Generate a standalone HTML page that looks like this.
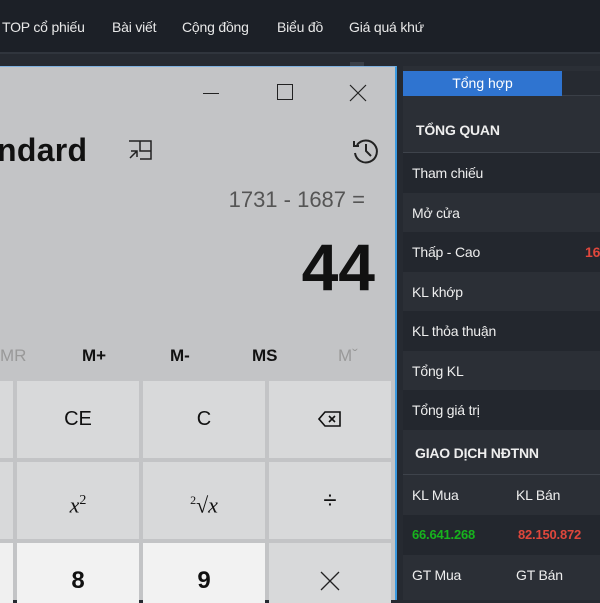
<!DOCTYPE html>
<html><head><meta charset="utf-8"><style>
*{margin:0;padding:0;box-sizing:border-box}
body{width:600px;height:600px;overflow:hidden;background:#262a31;font-family:"Liberation Sans",sans-serif;position:relative}
.nav{position:absolute;left:0;top:0;width:600px;height:54px;background:#1c2027;border-bottom:2px solid #30353d}
.nav span{position:absolute;top:19px;color:#e8e8e8;font-size:14px;letter-spacing:-0.2px}
.calc{position:absolute;left:0;top:66px;width:397px;height:534px;background:#c3c4c6;border-top:1px solid #7fb0de;border-right:2px solid #3b9ae0}
.t{position:absolute;font-family:"Liberation Sans",sans-serif;color:#111}
.btn{position:absolute;background:#d8d9da;font-size:20px;color:#111;text-align:center;font-family:"Liberation Sans",sans-serif}
.panel{position:absolute;left:403px;top:66px;width:197px;height:534px;background:#2b2f36}
.row{position:absolute;left:403px;width:197px;height:40px;color:#eee;font-size:14px;letter-spacing:-0.2px}
.row span{position:absolute;top:12px}
</style></head><body>
<div class="nav">
<span style="left:2px">TOP cổ phiếu</span>
<span style="left:112px">Bài viết</span>
<span style="left:182px">Cộng đồng</span>
<span style="left:277px">Biểu đồ</span>
<span style="left:349px">Giá quá khứ</span>
</div>
<div style="position:absolute;left:350px;top:62px;width:14px;height:6px;background:#3a3f47"></div>
<div class="panel"></div>
<div style="position:absolute;left:403px;top:71px;width:159px;height:25px;background:#2f74d0;color:#fff;font-size:14px;text-align:center;line-height:25px">Tổng hợp</div>
<div style="position:absolute;left:562px;top:71px;width:38px;height:25px;background:#262a31;border-bottom:1px solid #3a3f47"></div>
<div class="row" style="top:110px;height:43px;border-bottom:1px solid #3e434b;background:#2b2f36"><span style="left:13px;top:12px;font-weight:bold;font-size:14px">TỔNG QUAN</span></div>
<div class="row" style="top:153px;background:#23272e"><span style="left:9px">Tham chiếu</span></div>
<div class="row" style="top:193px;background:#2b2f36"><span style="left:9px">Mở cửa</span></div>
<div class="row" style="top:232px;background:#23272e"><span style="left:9px">Thấp - Cao</span><span style="left:182px;color:#e0473c;font-weight:bold">16</span></div>
<div class="row" style="top:272px;background:#2b2f36"><span style="left:9px">KL khớp</span></div>
<div class="row" style="top:311px;background:#23272e"><span style="left:9px">KL thỏa thuận</span></div>
<div class="row" style="top:351px;background:#2b2f36"><span style="left:9px">Tổng KL</span></div>
<div class="row" style="top:390px;background:#23272e"><span style="left:9px">Tổng giá trị</span></div>
<div class="row" style="top:430px;height:45px;border-bottom:1px solid #3e434b;background:#2b2f36"><span style="left:12px;top:15px;font-weight:bold">GIAO DỊCH NĐTNN</span></div>
<div class="row" style="top:475px;background:#2b2f36"><span style="left:9px">KL Mua</span><span style="left:113px">KL Bán</span></div>
<div class="row" style="top:515px;background:#23272e"><span style="left:9px;color:#17b31d;font-weight:bold;font-size:13px">66.641.268</span><span style="left:115px;color:#e0473c;font-weight:bold;font-size:13px">82.150.872</span></div>
<div class="row" style="top:555px;background:#2b2f36"><span style="left:9px">GT Mua</span><span style="left:113px">GT Bán</span></div>

<div class="calc">
<div style="position:absolute;left:203px;top:26px;width:16px;height:1px;background:#222"></div>
<div style="position:absolute;left:277px;top:17px;width:16px;height:16px;border:1px solid #222"></div>
<svg style="position:absolute;left:349px;top:17px" width="18" height="18"><path d="M1 1L17 17M17 1L1 17" stroke="#222" stroke-width="1.2"/></svg>
<div class="t" style="left:-3px;top:65px;font-size:32px;font-weight:bold;letter-spacing:0.3px">ndard</div>
<svg style="position:absolute;left:128px;top:72px" width="26" height="22" fill="none" stroke="#222" stroke-width="1.5"><path d="M1 2H23V20H12M12 2V12H23M2 19L9 12M3 12H9V18"/></svg>
<svg style="position:absolute;left:352px;top:70px" width="28" height="28" fill="none" stroke="#222" stroke-width="2"><path d="M5 8A11 11 0 1 1 3 16M2 4V9H7M14 7V14L19 19"/></svg>
<div class="t" style="right:30px;top:120px;font-size:22px;color:#555">1731 - 1687 =</div>
<div class="t" style="right:20px;top:162px;font-size:66px;font-weight:bold">44</div>
<div class="t" style="left:0px;top:279px;font-size:17px;color:#999">MR</div>
<div class="t" style="left:82px;top:279px;font-size:17px;font-weight:bold">M+</div>
<div class="t" style="left:170px;top:279px;font-size:17px;font-weight:bold">M-</div>
<div class="t" style="left:252px;top:279px;font-size:17px;font-weight:bold">MS</div>
<div class="t" style="left:338px;top:279px;font-size:17px;color:#999">Mˇ</div>
<div class="btn" style="left:0;top:314px;width:13px;height:77px"></div>
<div class="btn" style="left:17px;top:314px;width:122px;height:77px;line-height:77px">CE</div>
<div class="btn" style="left:143px;top:314px;width:122px;height:77px;line-height:77px">C</div>
<div class="btn" style="left:269px;top:314px;width:122px;height:77px">
<svg style="margin-top:29px" width="24" height="18" fill="none" stroke="#111" stroke-width="1.6"><path d="M7 2H22V16H7L1 9Z M11 6L17 12M17 6L11 12"/></svg></div>
<div class="btn" style="left:0;top:395px;width:13px;height:77px"></div>
<div class="btn" style="left:17px;top:395px;width:122px;height:77px;line-height:77px;font-family:'Liberation Serif',serif;font-style:italic;font-size:22px">x<sup style="font-style:normal;font-size:14px">2</sup></div>
<div class="btn" style="left:143px;top:395px;width:122px;height:77px;line-height:77px;font-family:'Liberation Serif',serif;font-size:22px"><sup style="font-size:12px">2</sup>√<i>x</i></div>
<div class="btn" style="left:269px;top:395px;width:122px;height:77px;line-height:77px;font-size:24px">÷</div>
<div class="btn" style="left:0;top:476px;width:13px;height:60px;background:#f0f0f0"></div>
<div class="btn" style="left:17px;top:476px;width:122px;height:60px;background:#f2f2f2;font-weight:bold;font-size:24px;padding-top:24px">8</div>
<div class="btn" style="left:143px;top:476px;width:122px;height:60px;background:#f2f2f2;font-weight:bold;font-size:24px;padding-top:24px">9</div>
<div class="btn" style="left:269px;top:476px;width:122px;height:60px">
<svg style="margin-top:28px" width="20" height="20"><path d="M1 1L19 19M19 1L1 19" stroke="#222" stroke-width="1.3"/></svg></div>
</div>
</body></html>
